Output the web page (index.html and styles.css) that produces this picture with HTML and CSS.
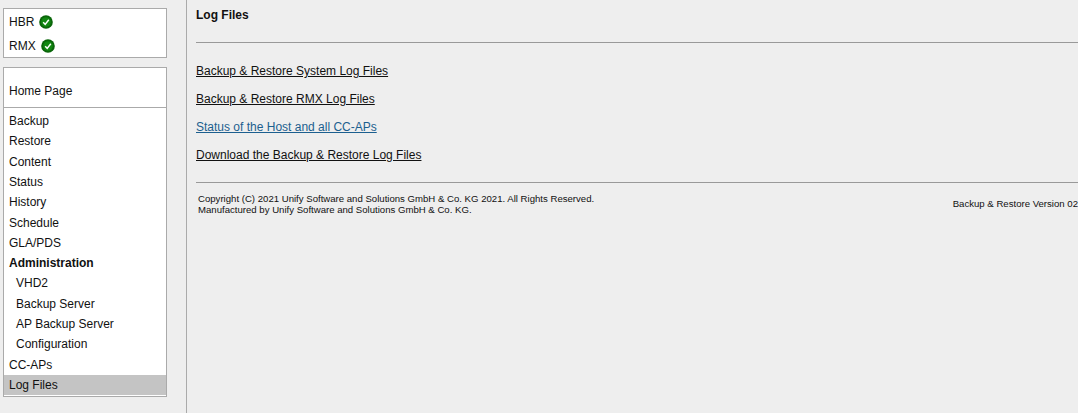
FILE: index.html
```html
<!DOCTYPE html>
<html lang="en">
<head>
<meta charset="utf-8">
<title>Log Files</title>
<link rel="stylesheet" href="styles.css">
</head>
<body>
<div class="page">
  <aside class="sidebar">
    <div class="box status-box">
      <div class="status-row">HBR
        <svg class="ok" viewBox="0 0 14 14"><circle cx="7" cy="7" r="6.8" fill="#0a660a"/><circle cx="7" cy="7" r="4.8" fill="#128812"/><path d="M4.2 7.2l2 2.2L9.8 4.8" fill="none" stroke="#fff" stroke-width="1.5"/></svg>
      </div>
      <div class="status-row">RMX
        <svg class="ok" viewBox="0 0 14 14"><circle cx="7" cy="7" r="6.8" fill="#0a660a"/><circle cx="7" cy="7" r="4.8" fill="#128812"/><path d="M4.2 7.2l2 2.2L9.8 4.8" fill="none" stroke="#fff" stroke-width="1.5"/></svg>
      </div>
    </div>
    <nav class="box nav-box">
      <div class="home">Home Page</div>
      <ul class="menu">
        <li>Backup</li>
        <li>Restore</li>
        <li>Content</li>
        <li>Status</li>
        <li>History</li>
        <li>Schedule</li>
        <li>GLA/PDS</li>
        <li class="bold">Administration</li>
        <li class="sub">VHD2</li>
        <li class="sub">Backup Server</li>
        <li class="sub">AP Backup Server</li>
        <li class="sub">Configuration</li>
        <li>CC-APs</li>
        <li class="active">Log Files</li>
      </ul>
    </nav>
  </aside>
  <main class="content">
    <h1 class="title">Log Files</h1>
    <hr class="rule first">
    <div class="links">
      <a href="#">Backup &amp; Restore System Log Files</a>
      <a href="#">Backup &amp; Restore RMX Log Files</a>
      <a href="#" class="visited">Status of the Host and all CC-APs</a>
      <a href="#">Download the Backup &amp; Restore Log Files</a>
    </div>
    <hr class="rule second">
    <div class="footer">
      <div class="copy">Copyright (C) 2021 Unify Software and Solutions GmbH &amp; Co. KG 2021. All Rights Reserved.<br>Manufactured by Unify Software and Solutions GmbH &amp; Co. KG.</div>
      <div class="version">Backup &amp; Restore Version 02</div>
    </div>
  </main>
</div>
</body>
</html>
```
FILE: styles.css
```css
html, body {
  margin: 0;
  padding: 0;
  height: 100%;
  overflow: hidden;
  background: #eeeeee;
  color: #111;
  font-family: "Liberation Sans", Arial, sans-serif;
  font-size: 12px;
}
.page {
  display: flex;
  height: 413px;
  width: 1078px;
  overflow: hidden;
}
.sidebar {
  flex: 0 0 187px;
  box-sizing: border-box;
  border-right: 1px solid #aaaaaa;
  padding: 8px 0 0 3px;
}
.box {
  box-sizing: border-box;
  width: 164px;
  background: #fff;
  border: 1px solid #aaaaaa;
}
.status-box {
  height: 50px;
  padding-top: 1px;
}
.status-row {
  display: flex;
  align-items: center;
  gap: 5px;
  height: 24px;
  padding-left: 5px;
  font-size: 12px;
}
.ok {
  width: 14px;
  height: 14px;
  margin-bottom: 1px;
}
.nav-box {
  margin-top: 9px;
  height: 330px;
}
.home {
  box-sizing: border-box;
  height: 40px;
  padding: 16px 0 0 5px;
  line-height: 14px;
  border-bottom: 1px solid #aaaaaa;
}
.menu {
  list-style: none;
  margin: 3.1px 0 0;
  padding: 0;
}
.menu li {
  height: 20.3px;
  line-height: 20.3px;
  padding-left: 5px;
}
.menu .bold {
  font-weight: bold;
}
.menu .sub {
  padding-left: 12px;
}
.menu .active {
  background: #c4c4c4;
}
.content {
  flex: 1;
  min-width: 0;
  padding: 8px 0 0 9px;
}
.title {
  margin: 0;
  font-size: 12px;
  font-weight: bold;
  line-height: 14px;
}
.rule {
  height: 1px;
  margin: 0;
  border: 0;
  background: #999999;
}
.rule.first {
  margin-top: 20px;
}
.links {
  display: flex;
  flex-direction: column;
  align-items: flex-start;
  gap: 14px;
  margin-top: 21px;
}
.links a {
  color: #111;
  line-height: 14px;
  text-decoration: underline;
}
.links a.visited {
  color: #1c5f8f;
}
.rule.second {
  margin-top: 20px;
}
.footer {
  display: flex;
  justify-content: space-between;
  align-items: center;
  margin-top: 10px;
  padding-left: 2px;
  font-size: 9.6px;
  line-height: 11px;
  white-space: nowrap;
}
.version {
  margin-bottom: 2px;
}
```
